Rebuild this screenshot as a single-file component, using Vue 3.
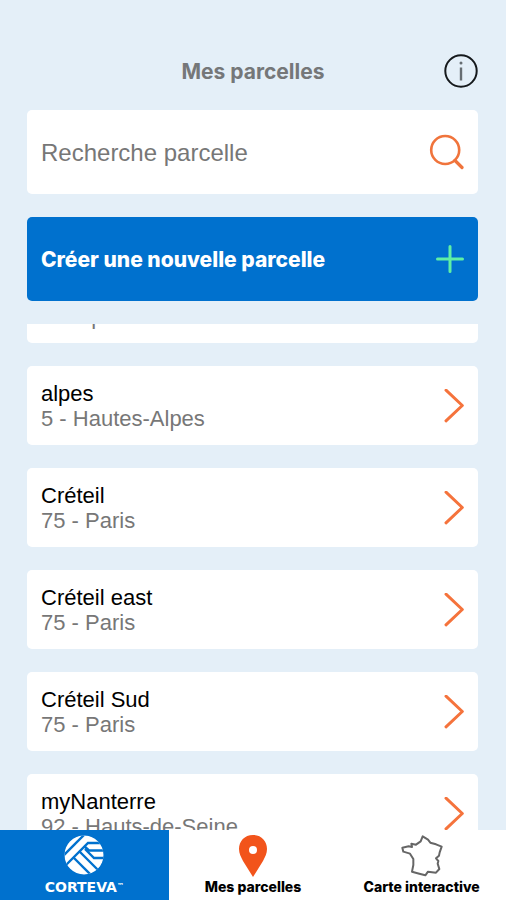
<script setup>
	import { ref, computed, onMounted } from 'vue'

	const search = ref('');
	const list = ref(null);

	const parcelles = ref([
		{ id: 1, name: 'Digne', dept: '4 - Alpes-de-Haute-Provence' },
		{ id: 2, name: 'alpes', dept: '5 - Hautes-Alpes' },
		{ id: 3, name: 'Créteil', dept: '75 - Paris' },
		{ id: 4, name: 'Créteil east', dept: '75 - Paris' },
		{ id: 5, name: 'Créteil Sud', dept: '75 - Paris' },
		{ id: 6, name: 'myNanterre', dept: '92 - Hauts-de-Seine' }
	]);

	const filtered = computed(() => {
		var q = search.value.toLowerCase();
		return parcelles.value.filter(p => p.name.toLowerCase().includes(q));
	});

	// Start a bit down the list, so it is clear that it scrolls.
	onMounted(() => {
		list.value.scrollTop = 60;
	});
</script>

<template>
	<div class="page">
		<header>
			<h1>Mes parcelles</h1>
			<button class="info" aria-label="Informations">
				<svg viewBox="0 0 34 34" width="34" height="34">
					<circle cx="17" cy="17" r="15.7" fill="none" stroke="#15191c" stroke-width="2" />
					<path d="M17 13.5V26.5" stroke="#666d72" stroke-width="2.4" />
					<circle cx="17" cy="9" r="1.5" fill="#666d72" />
				</svg>
			</button>
		</header>

		<div class="tools">
			<label class="box search">
				<input v-model="search" type="text" placeholder="Recherche parcelle" aria-label="Recherche parcelle">
				<svg viewBox="0 0 36 36" width="36" height="36" fill="none" stroke="#f0743c" stroke-width="2.6" stroke-linecap="round">
					<circle cx="17.2" cy="16" r="14" />
					<path d="M27 26.500L34 33.500" stroke-width="3.2" />
				</svg>
			</label>

			<button class="box create">
				<span>Créer une nouvelle parcelle</span>
				<svg viewBox="0 0 28 28" width="28" height="28" stroke="#5ff0a5" stroke-width="3" stroke-linecap="round">
					<path d="M14 1.5V26.5M1.5 14H26.5" />
				</svg>
			</button>
		</div>

		<ul ref="list" class="list">
			<li v-for="item in filtered" :key="item.id">
				<a href="#" class="item">
					<span class="text">
						<span class="name">{{ item.name }}</span>
						<span class="dept">{{ item.dept }}</span>
					</span>
					<svg viewBox="0 0 20 34" width="20" height="34" fill="none" stroke="#f5733c" stroke-width="3" stroke-linecap="round" stroke-linejoin="round">
						<path d="M2 1.2L18.300 16.500L2 31.800" />
					</svg>
				</a>
			</li>
		</ul>

		<nav>
			<a href="#" class="brand">
				<svg viewBox="0 0 40 40" width="40" height="40">
					<defs>
						<clipPath id="globe"><circle cx="20" cy="20" r="19.500" /></clipPath>
					</defs>
					<g clip-path="url(#globe)">
						<circle cx="20" cy="20" r="20" fill="#fff" />
						<g fill="none" stroke="#0071ce" stroke-width="2.4">
							<path d="M-1 21L20 0" />
							<path d="M2 30L24 8H41" />
							<path d="M20 11L25 15.500H41" />
							<path d="M15 16L36 37M21 14L30 23H41" />
							<path d="M9 22L28 41" />
						</g>
					</g>
				</svg>
				<span>CORTEVA<small>™</small></span>
			</a>
			<a href="#">
				<svg viewBox="0 0 30 42" width="30" height="42">
					<path fill="#f2541b" fill-rule="evenodd" d="M15 0C6.500 0 1 6.300 1 14C1 18.500 3 22 5 26L15 42L25 26C27 22 29 18.500 29 14C29 6.300 23.500 0 15 0ZM15 11A4 4 0 1 1 15 19A4 4 0 1 1 15 11Z" />
				</svg>
				<span>Mes parcelles</span>
			</a>
			<a href="#">
				<svg viewBox="17 14 126 126" width="42" height="42" fill="none" stroke="#666" stroke-width="6" stroke-linejoin="round">
					<path d="M82 18L98 28L105 37L122 42L139 49L133 66L131 76L122 84L129 92L127 100L132 116L122 127L98 124L90 135L72 130L50 124L54 104L54 86L44 70L24 64L21 52L40 48L50 50L48 40L62 43L76 33Z" />
				</svg>
				<span>Carte interactive</span>
			</a>
		</nav>
	</div>
</template>

<style>
	body {
		background: #e4eff8;
	}
</style>

<style scoped>
	.page {
		display: flex;
		flex-direction: column;
		height: 100vh;
		background: #e4eff8;
		font-family: "Liberation Sans", Arial, sans-serif;
	}

	button {
		padding: 0;
		border: none;
		background: none;
		cursor: pointer;
	}

	svg {
		display: block;
		flex: none;
	}

	header {
		display: grid;
		grid-template-columns: 34px 1fr 34px;
		align-items: center;
		padding: 53px 28px 21px;
	}
	h1 {
		grid-column: 2;
		margin: 0;
		padding-top: 2px;
		color: #757779;
		font: 700 21px/34px Inter, sans-serif;
		text-align: center;
	}

	.tools {
		display: flex;
		flex-direction: column;
		gap: 23px;
		padding: 0 28px 23px 27px;
	}
	.box {
		display: flex;
		align-items: center;
		justify-content: space-between;
		height: 84px;
		padding: 0 14px;
		border-radius: 5px;
	}
	.search {
		background: #fff;
	}
	.search input {
		flex: 1;
		min-width: 0;
		padding: 2px 0 0;
		border: none;
		outline: none;
		background: none;
		color: #000;
		font: 24px "Liberation Sans", Arial, sans-serif;
	}
	.search input::placeholder {
		color: #777;
		opacity: 1;
	}
	.create {
		background: #0071ce;
		color: #fff;
		font: 800 21px Inter, sans-serif;
	}

	.list {
		flex: 1;
		min-height: 0;
		margin: 0;
		padding: 0 28px 0 27px;
		overflow-y: auto;
		scrollbar-width: none;
		list-style: none;
	}
	.list li + li {
		margin-top: 23px;
	}
	.item {
		display: flex;
		align-items: center;
		justify-content: space-between;
		height: 79px;
		padding: 0 14px;
		border-radius: 5px;
		background: #fff;
		text-decoration: none;
	}
	.text {
		display: flex;
		flex-direction: column;
		font-size: 22px;
		line-height: 25px;
	}
	.name {
		color: #000;
	}
	.dept {
		color: #777;
	}

	nav {
		display: grid;
		grid-template-columns: repeat(3, 1fr);
		height: 70px;
		background: #fff;
	}
	nav a {
		display: flex;
		flex-direction: column;
		align-items: center;
		padding-top: 5px;
		color: #000;
		font: 800 14px/20px Inter, sans-serif;
		text-decoration: none;
	}
	nav .brand {
		background: #0071ce;
		color: #fff;
		font: bold 14px/24px "DejaVu Sans", sans-serif;
	}
	.brand small {
		font-size: 7px;
		vertical-align: 4px;
		line-height: 1;
	}
</style>
